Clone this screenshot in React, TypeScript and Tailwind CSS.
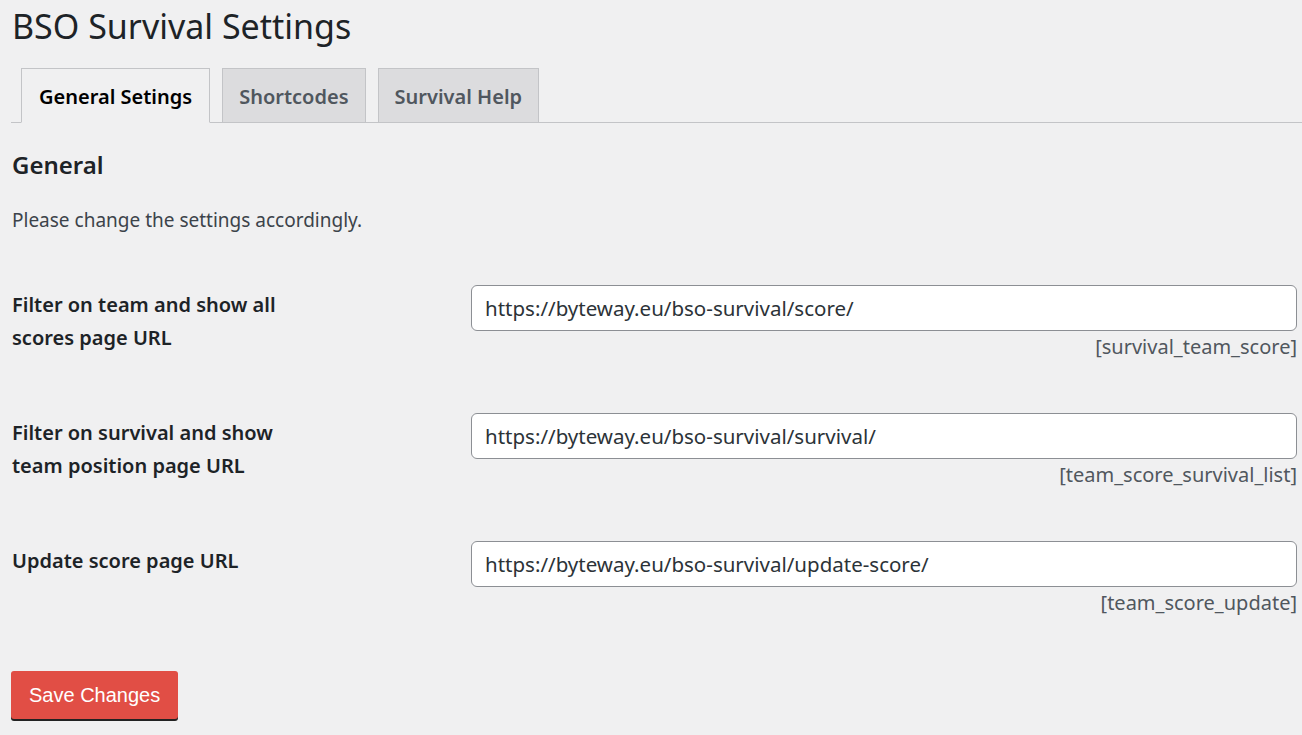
const rows = [
  {
    label: "Filter on team and show all scores page URL",
    value: "https://byteway.eu/bso-survival/score/",
    code: "[survival_team_score]",
  },
  {
    label: "Filter on survival and show team position page URL",
    value: "https://byteway.eu/bso-survival/survival/",
    code: "[team_score_survival_list]",
  },
  {
    label: "Update score page URL",
    value: "https://byteway.eu/bso-survival/update-score/",
    code: "[team_score_update]",
  },
];

const tabs = ["General Setings", "Shortcodes", "Survival Help"];

export default function App() {
  return (
    <div
      className="min-h-screen bg-[#f0f0f1] text-[#1d2327]"
      style={{ fontFamily: '"Segoe UI", "Noto Sans", sans-serif' }}
    >
      <h1 className="pl-[12px] pt-[4px] text-[34px] font-normal leading-[44px]">
        BSO Survival Settings
      </h1>

      <nav className="ml-[11px] mt-[20px] flex gap-[12px] border-b border-[#c3c4c7] pl-[10px]">
        {tabs.map((t, i) => (
          <a
            key={t}
            className={
              i === 0
                ? "-mb-px flex h-[55px] items-center border border-b-[#f0f0f1] border-[#c3c4c7] bg-[#f0f0f1] px-[17px] pt-[2px] text-[20px] font-semibold text-black"
                : "flex h-[54px] items-center border border-b-0 border-[#c3c4c7] bg-[#dcdcde] px-[16px] pt-[2px] text-[20px] font-semibold text-[#50575e]"
            }
          >
            {t}
          </a>
        ))}
      </nav>

      <div className="pl-[12px] pr-[5px]">
        <h2 className="mt-[26px] text-[24px] font-semibold leading-[32px]">
          General
        </h2>
        <p className="mt-[25px] text-[19px] leading-[28px] text-[#3c434a]">
          Please change the settings accordingly.
        </p>

        <div className="mt-[51px] flex flex-col gap-[52px]">
          {rows.map((r) => (
            <div key={r.code} className="grid grid-cols-[459px_1fr]">
              <label className="max-w-[300px] pt-[3px] text-[20px] font-semibold leading-[33px]">
                {r.label}
              </label>
              <div className="flex flex-col">
                <input
                  readOnly
                  value={r.value}
                  className="h-[46px] w-full rounded-[6px] border border-[#8c8f94] bg-white px-[13px] text-[20.5px] text-[#2c3338] outline-none"
                />
                <span className="mt-[2px] text-right text-[20px] leading-[28px] text-[#50575e]">
                  {r.code}
                </span>
              </div>
            </div>
          ))}
        </div>

        <button
          className="-ml-px mt-[54px] h-[48px] rounded-[3px] bg-[#e14e45] px-[18px] text-[20px] text-white shadow-[0_2px_0_#222]"
          style={{ fontFamily: '"Liberation Sans", Arial, sans-serif' }}
        >
          Save Changes
        </button>
      </div>
    </div>
  );
}
